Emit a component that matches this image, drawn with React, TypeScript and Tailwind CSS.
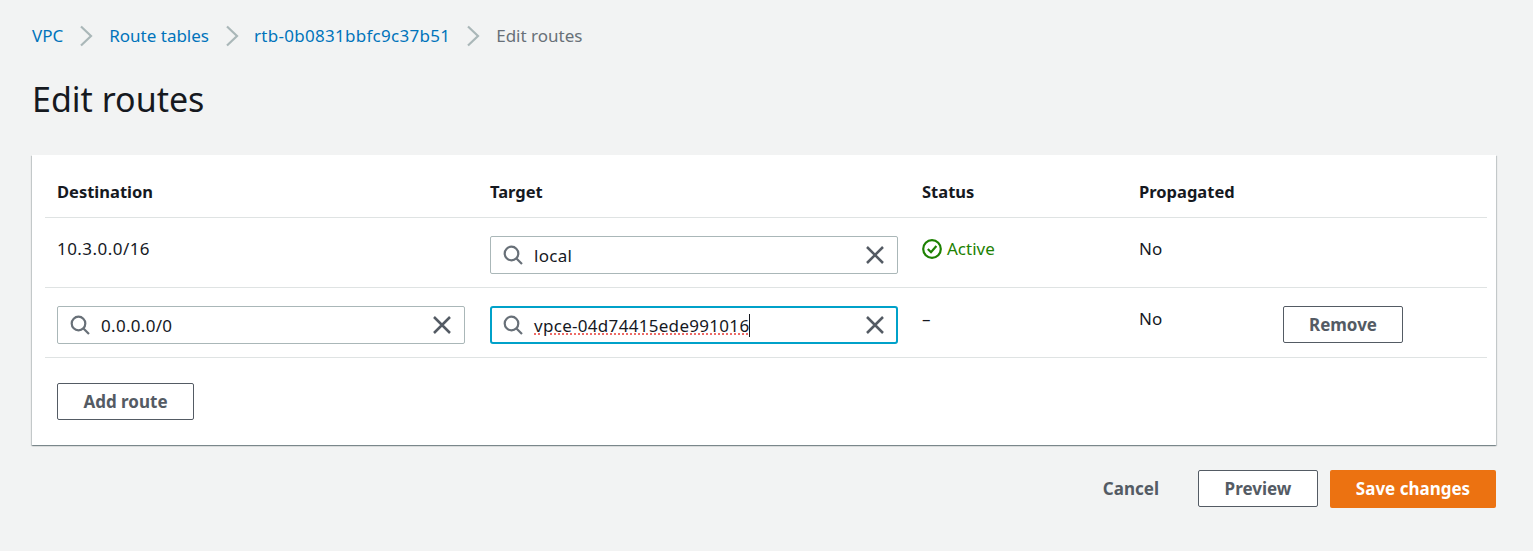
const COLS = "grid grid-cols-[433px_432px_217px_144px_1fr] px-3 border-b border-[#dfe3e3]";

function Crumb({ label, className = "" }: { label: string; className?: string }) {
  return (
    <>
      <a className={`text-[#0073bb] ${className}`}>{label}</a>
      <svg width="14" height="22" viewBox="0 0 14 22" fill="none" stroke="#aab7b8" strokeWidth="2.2" className="mx-[16px]">
        <path d="M2 1.5 12 11 2 20.5" />
      </svg>
    </>
  );
}

function SearchField({ value, focused, squiggle }: { value: string; focused?: boolean; squiggle?: boolean }) {
  return (
    <div
      className={`flex items-center w-[408px] h-[38px] bg-white ${
        focused ? "rounded-[3px] border-2 border-[#00a1c9] pl-[11px] pr-[11px]" : "rounded-[2px] border border-[#aab7b8] pl-[12px] pr-[12px]"
      }`}
    >
      <svg width="20" height="20" viewBox="0 0 20 20" fill="none" stroke="#687078" strokeWidth="2.2" className="shrink-0">
        <circle cx="8.5" cy="8.5" r="6.8" />
        <path d="M13.5 13.5 19 19" />
      </svg>
      <span className="ml-[11px] flex-1 text-[17px] tracking-[0.3px] text-[#16191f] leading-none">
        {squiggle ? (
          <span className="underline decoration-dotted decoration-[#ee6a66] decoration-2 underline-offset-2 border-r border-[#16191f]">{value}</span>
        ) : (
          value
        )}
      </span>
      <svg width="20" height="20" viewBox="0 0 20 20" fill="none" stroke="#545b64" strokeWidth="2.5" className="shrink-0">
        <path d="M2 2 18 18M18 2 2 18" />
      </svg>
    </div>
  );
}

function Btn({ children, className = "" }: { children: string; className?: string }) {
  return (
    <button className={`h-[37px] pt-[1px] rounded-[2px] border border-[#545b64] bg-white text-[#545b64] text-[17px] font-bold ${className}`}>
      {children}
    </button>
  );
}

export default function App() {
  return (
    <div className="min-h-[551px] bg-[#f2f3f3] pl-[32px] pr-[37px] pt-[20px] font-['Noto_Sans','Open_Sans',sans-serif] text-[#16191f]">
      <nav className="flex items-center h-[32px] text-[17px]">
        <Crumb label="VPC" />
        <Crumb label="Route tables" />
        <Crumb label="rtb-0b0831bbfc9c37b51" className="tracking-[0.28px] ml-[-1px]" />
        <span className="text-[#687078]">Edit routes</span>
      </nav>

      <h1 className="mt-[22px] mb-[-2px] text-[34px] leading-[50px] font-normal">Edit routes</h1>

      <section className="mt-[33px] h-[290px] bg-white pl-[13px] pr-[9px] shadow-[0_1px_1px_0_rgba(0,28,36,0.3),1px_1px_1px_0_rgba(0,28,36,0.15),-1px_1px_1px_0_rgba(0,28,36,0.15)]">
        <div className={`${COLS} h-[63px] items-end pb-[12px] text-[16.5px] font-bold`}>
          <span>Destination</span>
          <span>Target</span>
          <span>Status</span>
          <span>Propagated</span>
        </div>

        <div className={`${COLS} h-[70px] pt-[18px] text-[17px]`}>
          <span className="leading-[26px] tracking-[0.45px]">10.3.0.0/16</span>
          <SearchField value="local" />
          <span className="flex items-center gap-[5px] h-[26px] text-[#1d8102]">
            <svg width="20" height="20" viewBox="0 0 20 20" fill="none" stroke="#1d8102" strokeWidth="2.2">
              <circle cx="10" cy="10" r="8.8" />
              <path d="M5.8 10l3.2 3.2 5.4-6.2" />
            </svg>
            Active
          </span>
          <span className="leading-[26px]">No</span>
          <span />
        </div>

        <div className={`${COLS} h-[70px] pt-[18px] text-[17px]`}>
          <SearchField value="0.0.0.0/0" />
          <SearchField value="vpce-04d74415ede991016" focused squiggle />
          <span className="leading-[26px]">–</span>
          <span className="leading-[26px]">No</span>
          <Btn className="w-[120px]">Remove</Btn>
        </div>

        <div className="px-3 pt-[25px]">
          <Btn className="w-[137px]">Add route</Btn>
        </div>
      </section>

      <footer className="mt-[25px] flex items-start justify-end">
        <span className="h-[37px] leading-[37px] text-[17px] font-bold text-[#545b64] mr-[39px]">Cancel</span>
        <Btn className="w-[120px]">Preview</Btn>
        <button className="ml-[12px] w-[166px] h-[38px] rounded-[2px] bg-[#ec7211] text-white text-[17px] font-bold">
          Save changes
        </button>
      </footer>
    </div>
  );
}
